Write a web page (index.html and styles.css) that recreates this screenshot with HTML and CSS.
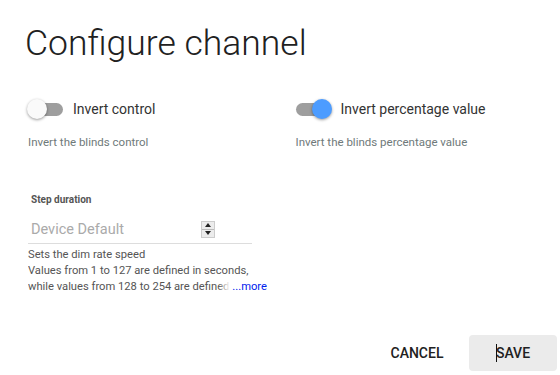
FILE: index.html
```html
<!DOCTYPE html>
<html lang="en">
<head>
    <meta charset="UTF-8">
    <meta name="viewport" content="width=device-width, initial-scale=1.0">
    <title>Configure channel</title>
    <link rel="stylesheet" href="styles.css">
</head>
<body>
    <div class="dialog">
        <h1 class="title">Configure channel</h1>

        <div class="toggles">
            <div class="toggle-field">
                <label class="toggle">
                    <span class="track"><span class="thumb"></span></span>
                    <span class="toggle-label">Invert control</span>
                </label>
                <div class="hint">Invert the blinds control</div>
            </div>
            <div class="toggle-field">
                <label class="toggle on">
                    <span class="track"><span class="thumb"></span></span>
                    <span class="toggle-label">Invert percentage value</span>
                </label>
                <div class="hint">Invert the blinds percentage value</div>
            </div>
        </div>

        <div class="number-field">
            <div class="field-title">Step duration</div>
            <div class="input-row">
                <span class="placeholder">Device Default</span>
                <span class="spinner">
                    <span class="spin-up"></span>
                    <span class="spin-down"></span>
                </span>
            </div>
            <div class="description">
                Sets the dim rate speed<br>
                Values from 1 to 127 are defined in seconds, while values from 128 to 254 are defined in tenths of a second
                <a href="#" class="more">...more</a>
            </div>
        </div>

        <div class="actions">
            <button class="btn">Cancel</button>
            <button class="btn btn-save"><span class="caret"></span>Save</button>
        </div>
    </div>
</body>
</html>
```

FILE: styles.css
```css
body {
    margin: 0;
    font-family: Roboto, "Noto Sans", sans-serif;
    background: #fff;
    color: #212121;
}
.dialog {
    width: 560px;
    height: 375px;
    padding: 22px 0 0 25px;
    box-sizing: border-box;
    display: flex;
    flex-direction: column;
}
.title {
    margin: 0;
    font-size: 35.5px;
    font-weight: 300;
    line-height: 42px;
    color: #212121;
}
.toggles {
    display: flex;
    margin-top: 33px;
}
.toggle-field {
    width: 269px;
    padding-left: 3px;
}
.toggle {
    display: flex;
    align-items: center;
    height: 24px;
}
.track {
    position: relative;
    width: 35px;
    height: 13px;
    border-radius: 7px;
    background: #9e9e9e;
}
.thumb {
    position: absolute;
    top: -4px;
    left: -1px;
    width: 20px;
    height: 20px;
    border-radius: 50%;
    background: #fafafa;
    box-shadow: 0 1px 3px rgba(0, 0, 0, 0.4);
}
.toggle.on .thumb {
    left: 16px;
    background: #4c9cff;
}
.toggle-label {
    margin-left: 10px;
    font-size: 14px;
    color: #333;
}
.hint {
    margin-top: 14px;
    font-size: 11.5px;
    color: #6f7a7a;
}
.number-field {
    margin-top: 45px;
    padding-left: 3px;
    width: 224px;
}
.field-title {
    padding-left: 3px;
    font-size: 10px;
    font-weight: 700;
    color: #555;
}
.input-row {
    display: flex;
    align-items: center;
    justify-content: space-between;
    height: 28px;
    border-bottom: 1px solid #ddd;
    padding-left: 3px;
    padding-right: 37px;
    margin-top: 10px;
}
.placeholder {
    font-size: 14.5px;
    color: #aaa;
}
.spinner {
    display: flex;
    flex-direction: column;
    width: 14px;
    height: 17px;
    border: 1px solid #ccc;
    background: #ececec;
    box-sizing: border-box;
}
.spin-up, .spin-down {
    flex: 1;
    display: flex;
    align-items: center;
    justify-content: center;
}
.spin-up {
    border-bottom: 1px solid #bbb;
}
.spin-up::before {
    content: "";
    border: 3px solid transparent;
    border-bottom: 4px solid #222;
    border-top: 0;
}
.spin-down::before {
    content: "";
    border: 3px solid transparent;
    border-top: 4px solid #222;
    border-bottom: 0;
}
.description {
    position: relative;
    width: 239px;
    margin-top: 3px;
    font-size: 11.2px;
    line-height: 16px;
    max-height: 48px;
    overflow: hidden;
    color: #555;
}
.more {
    position: absolute;
    right: 0;
    bottom: 0;
    padding-left: 14px;
    background: linear-gradient(to right, rgba(255, 255, 255, 0), #fff 12px);
    color: #0022ee;
    text-decoration: none;
}
.actions {
    margin-top: auto;
    display: flex;
    justify-content: flex-end;
    gap: 8px;
    padding: 0 3px 4px 0;
}
.btn {
    position: relative;
    height: 36px;
    min-width: 88px;
    padding: 0 16px;
    border: none;
    border-radius: 4px;
    background: none;
    font-family: Roboto, sans-serif;
    font-size: 14px;
    font-weight: 500;
    text-transform: uppercase;
    color: #212121;
}
.btn-save {
    background: #ebebeb;
}
.caret {
    position: absolute;
    left: 27px;
    top: 9px;
    width: 1px;
    height: 18px;
    background: #111;
}
```
